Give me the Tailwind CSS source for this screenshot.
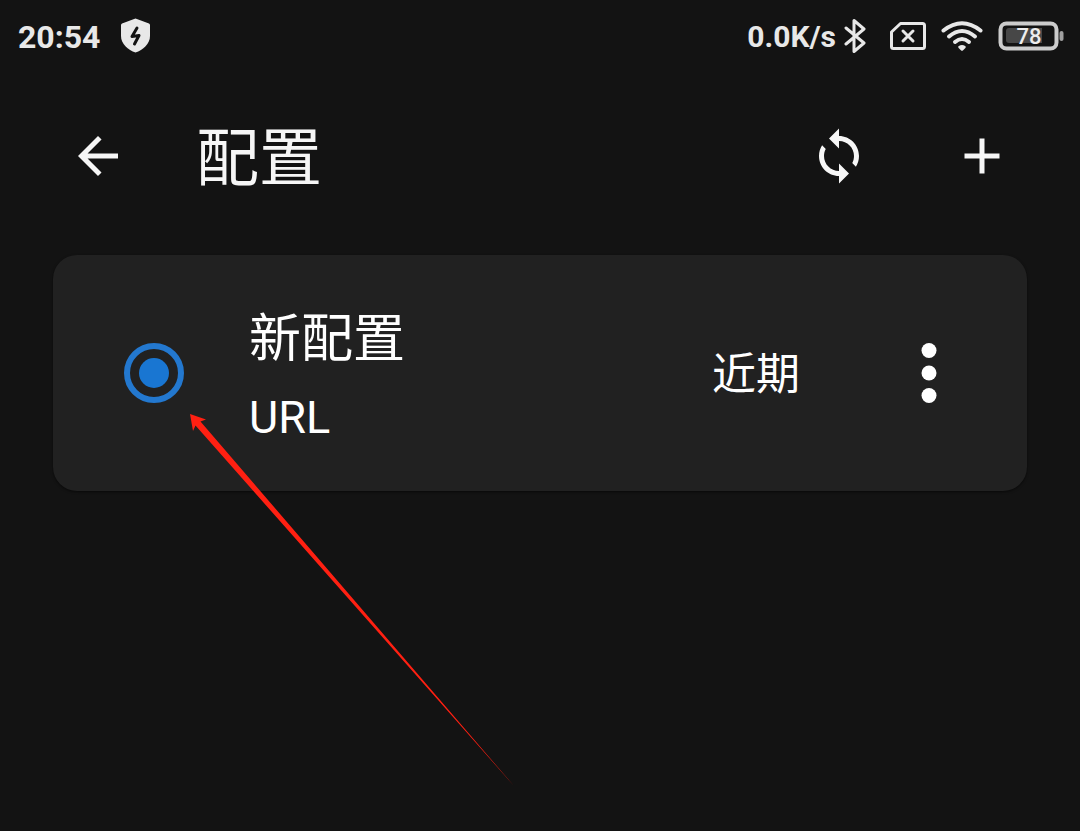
<!DOCTYPE html>
<html lang="zh-CN">
<head>
<meta charset="utf-8">
<meta name="viewport" content="width=device-width, initial-scale=1">
<title>配置</title>
<script src="https://cdn.jsdelivr.net/npm/@tailwindcss/browser@4"></script>
</head>
<body class="relative min-h-screen bg-[#131313] font-['Roboto','Noto_Sans_CJK_SC',sans-serif] text-[#f6f6f6]">
  <div class="flex h-18 items-center justify-between pr-4 pl-[18px] text-[#e8e8e8]">
    <div class="flex items-center gap-5">
      <span class="pt-0.5 text-[32px] leading-10 font-bold">20:54</span>
      <svg class="h-9 w-[30px]" viewBox="0 0 30 36" aria-hidden="true">
        <path d="M15.500 0.500 L29 5.500 Q30 6 30 7 V18 C30 26 23 32 15.500 34.500 C8 32 1 26 1 18 V7 Q1 6 2 5.500 Z" fill="currentColor"/>
        <path d="M17 10 L12 18.500 L19 17.500 L14.500 26" fill="none" stroke="#131313" stroke-width="3" stroke-linecap="round" stroke-linejoin="round"/>
      </svg>
    </div>
    <div class="flex items-center">
      <span class="pt-0.5 text-[30px] leading-10 font-bold">0.0K/s</span>
      <svg class="ml-2 h-9 w-[22px]" viewBox="0 0 22 36" fill="none" stroke="currentColor" stroke-width="3" stroke-linecap="round" stroke-linejoin="round" aria-hidden="true">
        <path d="M2 10 L20 25 L10 33.500 V2.500 L20 11 L2 26"/>
      </svg>
      <svg class="ml-6 h-7 w-9" viewBox="0 0 36 28" fill="none" stroke="currentColor" stroke-width="3" stroke-linecap="round" stroke-linejoin="round" aria-hidden="true">
        <path d="M10.500 1.500 H32.500 Q34.500 1.500 34.500 3.500 V24.500 Q34.500 26.500 32.500 26.500 H3.500 Q1.500 26.500 1.500 24.500 V10 Z"/>
        <path d="M13 9 L23 19 M23 9 L13 19"/>
      </svg>
      <svg class="ml-[15px] h-8 w-[42px]" viewBox="0 0 42 32" fill="none" stroke="currentColor" stroke-width="4" stroke-linecap="round" aria-hidden="true">
        <path d="M2.500 10.500 Q21 -4 39.500 10.500"/>
        <path d="M8 16.500 Q21 5.500 34 16.500"/>
        <path d="M14 22 Q21 16 28 22"/>
        <path d="M18.500 27 Q21 25.500 23.500 27 L21 29.500 Z" fill="currentColor" stroke-width="2.500" stroke-linejoin="round"/>
      </svg>
      <svg class="ml-[15px] h-[30px] w-[66px]" viewBox="0 0 66 30" role="img" aria-label="78%">
        <rect x="2.500" y="2.500" width="56" height="25" rx="6" fill="none" stroke="#cccccc" stroke-width="4"/>
        <path d="M11 7 H44 V22 H11 Q8 22 8 19 V10 Q8 7 11 7 Z" fill="#474747"/>
        <rect x="61.500" y="10" width="4" height="10" rx="2" fill="#a0a0a0"/>
        <text x="31" y="23" text-anchor="middle" font-size="22" font-weight="500" fill="#ededed">78</text>
      </svg>
    </div>
  </div>

  <header class="flex h-42 items-center px-[68px]">
    <button type="button" aria-label="返回" class="size-15">
      <svg class="size-15" viewBox="0 0 24 24" fill="currentColor" aria-hidden="true"><path d="M20 11H7.830l5.590-5.590L12 4l-8 8 8 8 1.410-1.410L7.830 13H20v-2z"/></svg>
    </button>
    <h1 class="ml-[68px] flex-1 pt-1.5 text-[63px] leading-20">配置</h1>
    <button type="button" aria-label="更新" class="size-15">
      <svg class="size-15" viewBox="0 0 24 24" fill="currentColor" aria-hidden="true"><path d="M12 4V1L8 5l4 4V6c3.310 0 6 2.690 6 6 0 1.010-.25 1.970-.7 2.800l1.460 1.460C19.540 15.030 20 13.570 20 12c0-4.420-3.580-8-8-8zm0 14c-3.310 0-6-2.690-6-6 0-1.010.25-1.970.7-2.800L5.240 7.740C4.460 8.970 4 10.430 4 12c0 4.420 3.580 8 8 8v3l4-4-4-4v3z"/></svg>
    </button>
    <button type="button" aria-label="新建" class="ml-[83px] size-15">
      <svg class="size-15" viewBox="0 0 24 24" fill="currentColor" aria-hidden="true"><path d="M19 13h-6v6h-2v-6H5v-2h6V5h2v6h6v2z"/></svg>
    </button>
  </header>

  <main class="px-[53px] pt-[15px]">
    <div class="flex items-center rounded-3xl bg-[#212121] py-[39px] pr-[53px] pl-[71px] text-white shadow-sm shadow-black/40">
      <input id="profile" type="radio" name="profile" checked class="grid size-15 shrink-0 appearance-none place-items-center rounded-full border-6 border-[#2378cf] before:size-[30px] before:rounded-full before:bg-[#1976d2]">
      <label for="profile" class="ml-[65px] flex flex-1 flex-col gap-1 pt-1.5">
        <span class="text-[52px] leading-20">新配置</span>
        <span class="text-[45px] leading-17">URL</span>
      </label>
      <span class="pt-1 text-[44px] leading-15">近期</span>
      <button type="button" aria-label="更多" class="ml-[84px] size-[90px]">
        <svg class="size-[90px]" viewBox="0 0 24 24" fill="currentColor" aria-hidden="true"><circle cx="12" cy="6" r="2"/><circle cx="12" cy="12" r="2"/><circle cx="12" cy="18" r="2"/></svg>
      </button>
    </div>
  </main>

  <svg class="pointer-events-none absolute top-[414px] left-[190px] h-[372px] w-[324px]" viewBox="0 0 324 372" fill="#ff2012" aria-hidden="true">
    <path d="M0 0 L16 5.500 L10.500 7.500 L324 372 L5.500 11.500 L3 17 Z"/>
  </svg>
</body>
</html>
